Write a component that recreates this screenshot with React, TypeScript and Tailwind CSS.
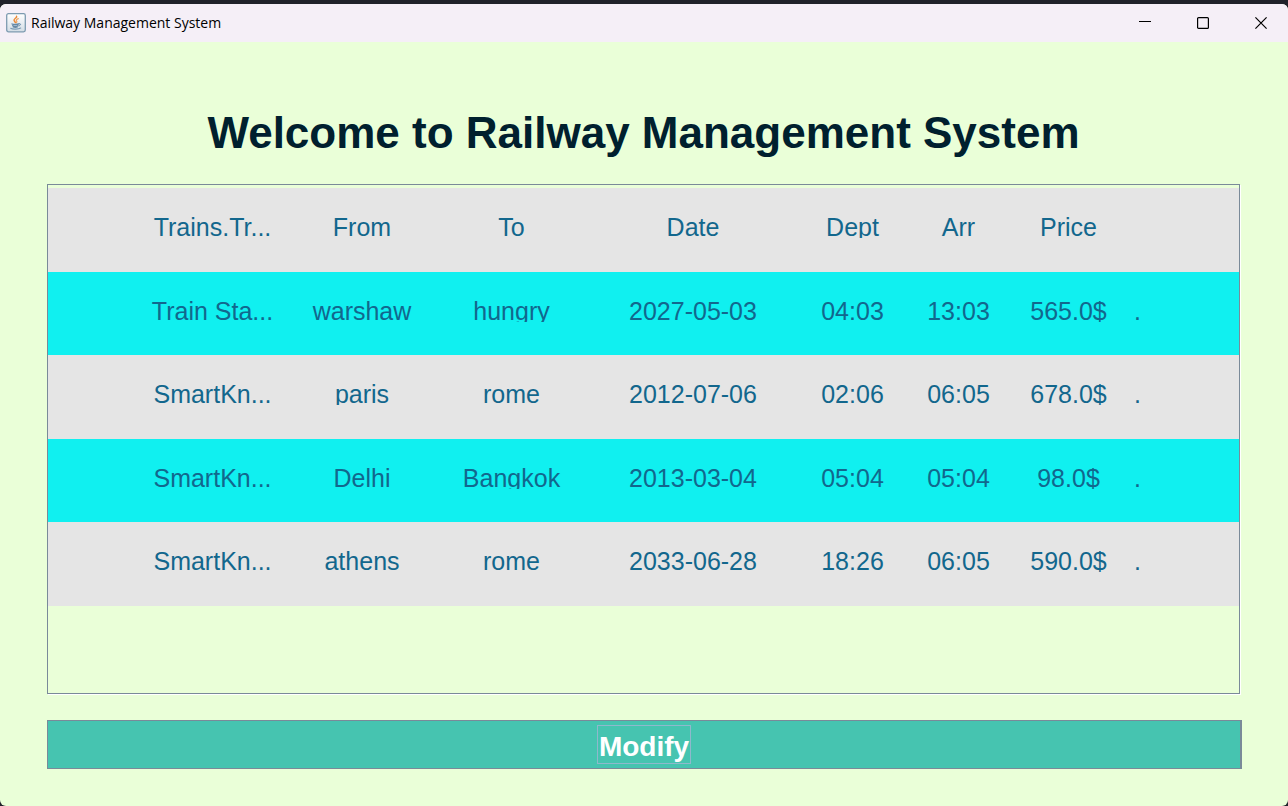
const columns = ["Trains.Tr...", "From", "To", "Date", "Dept", "Arr", "Price", ""];

const trains = [
  ["Train Sta...", "warshaw", "hungry", "2027-05-03", "04:03", "13:03", "565.0$", "."],
  ["SmartKn...", "paris", "rome", "2012-07-06", "02:06", "06:05", "678.0$", "."],
  ["SmartKn...", "Delhi", "Bangkok", "2013-03-04", "05:04", "05:04", "98.0$", "."],
  ["SmartKn...", "athens", "rome", "2033-06-28", "18:26", "06:05", "590.0$", "."],
];

function JavaIcon() {
  return (
    <svg width="20" height="20" viewBox="0 0 20 20" aria-hidden="true">
      <defs>
        <linearGradient id="tile" x1="0" y1="0" x2="0" y2="1">
          <stop offset="0" stopColor="#ffffff" />
          <stop offset="1" stopColor="#d3dde5" />
        </linearGradient>
      </defs>
      <rect x="0.7" y="0.7" width="18.6" height="18.1" rx="1.8" fill="url(#tile)" stroke="#7d9bb0" strokeWidth="1.3" />
      <g fill="none" strokeLinecap="round">
        <path d="M10.6 3.2c.8 1.700-3.300 2.500-2.500 4.400.3.800 1.100 1.200 1.300 2" stroke="#ee8a35" strokeWidth="1.500" />
        <path d="M12.300 5.600c-2 .7-2.500 1.600-1.700 2.400.5.600.4 1.100-.1 1.600" stroke="#f0a15c" strokeWidth="1.200" />
        <path d="M6 10.900c1 .6 5.600.6 6.800 0M6.600 12.600c1.500.6 4.200.6 5.400 0M7.200 14c1.300.4 3.100.4 4.200 0" stroke="#6488a6" strokeWidth="1.200" />
        <path d="M13.200 10.700c2.100-.4 1.900 1.500-.2 2.200" stroke="#6488a6" />
        <path d="M4.700 15.300c1.900 1.200 7.800 1.100 10-.3" stroke="#7b9cb5" strokeWidth="1.100" />
      </g>
    </svg>
  );
}

function TitleBar() {
  return (
    <header className="flex h-[38px] items-center justify-between bg-[#f5eff7] pl-1.5">
      <div className="flex items-center gap-[5px]">
        <JavaIcon />
        <span className="font-['Open_Sans',sans-serif] text-sm text-black">Railway Management System</span>
      </div>
      <div className="flex h-full gap-1">
        <button type="button" aria-label="Minimize" className="grid w-[54px] place-items-center">
          <svg width="12" height="12" viewBox="0 0 12 12" stroke="#000">
            <path d="M0 4.500h12" />
          </svg>
        </button>
        <button type="button" aria-label="Maximize" className="grid w-[54px] place-items-center">
          <svg width="12" height="12" viewBox="0 0 12 12" fill="none" stroke="#000" strokeWidth="1.200">
            <rect x="0.6" y="0.6" width="10.800" height="10.800" rx="1" />
          </svg>
        </button>
        <button type="button" aria-label="Close" className="grid w-[54px] place-items-center">
          <svg width="12" height="12" viewBox="0 0 12 12" stroke="#000" strokeWidth="1.200">
            <path d="M.4.4l11.200 11.200M11.600.4L.4 11.600" />
          </svg>
        </button>
      </div>
    </header>
  );
}

function TrainTable() {
  return (
    <table className="w-full table-fixed text-center text-[25px] leading-[22px] text-[#12678d]">
      <colgroup>
        <col />
        <col className="w-[150px]" />
        <col className="w-[149px]" />
        <col className="w-[150px]" />
        <col className="w-[213px]" />
        <col className="w-[106px]" />
        <col className="w-[106px]" />
        <col className="w-[114px]" />
        <col className="w-[24px]" />
        <col />
      </colgroup>
      <thead>
        <tr className="h-[84px] bg-[#e5e5e5]">
          <td />
          {columns.map((label, i) => (
            <th key={i} scope="col" className="pt-7 align-top font-normal">
              <div className="overflow-hidden whitespace-nowrap">{label}</div>
            </th>
          ))}
          <td />
        </tr>
      </thead>
      <tbody>
        {trains.map((train, row) => (
          <tr key={row} className="odd:h-[83px] odd:bg-[#10f0f0] even:h-[84px] even:bg-[#e5e5e5]">
            <td />
            {train.map((value, i) => (
              <td key={i} className="pt-7 align-top">
                <div className="overflow-hidden whitespace-nowrap">{value}</div>
              </td>
            ))}
            <td />
          </tr>
        ))}
      </tbody>
    </table>
  );
}

export default function App() {
  return (
    <div className="flex min-h-screen flex-col bg-[#20222a] pt-1 font-['Liberation_Sans',Arial,sans-serif]">
      <div className="flex grow flex-col overflow-hidden rounded-md bg-[#eaffd8]">
        <TitleBar />
        <main className="flex grow flex-col pt-[66px] pr-[46px] pb-[37px] pl-[47px]">
          <h1 className="mr-0.5 text-center text-[44px] leading-[50px] font-bold text-[#00202e]">
            Welcome to Railway Management System
          </h1>
          <section className="mt-[26px] mr-0.5 grow border border-[#7a8a99] pt-[3px] shadow-[1px_1px_0_#ffffff]">
            <TrainTable />
          </section>
          <button
            type="button"
            className="mt-[26px] flex h-[49px] items-center justify-center border border-r-2 border-[#7a8a99] bg-[#46c4b0] text-[28px] font-bold text-white"
          >
            <span className="border border-[#8fb8cc] px-px pt-1 leading-[33px]">Modify</span>
          </button>
        </main>
      </div>
    </div>
  );
}
